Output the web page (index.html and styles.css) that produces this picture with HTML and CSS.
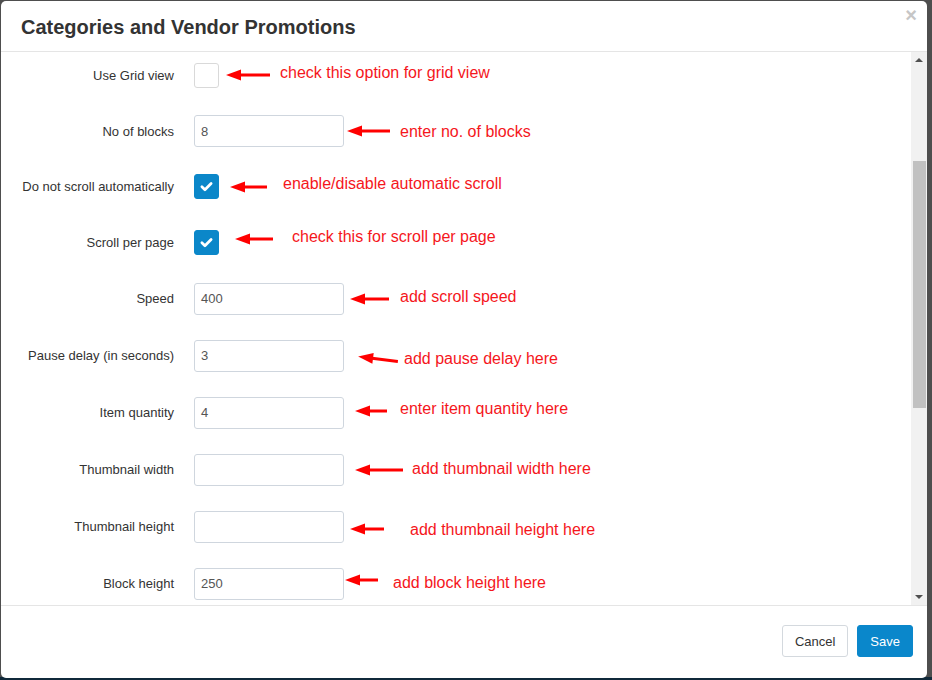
FILE: index.html
```html
<!DOCTYPE html>
<html lang="en">
<head>
<meta charset="utf-8">
<title>Categories and Vendor Promotions</title>
<link rel="stylesheet" href="styles.css">
</head>
<body>
<div class="modal">
  <div class="modal-header">
    <h4 class="modal-title">Categories and Vendor Promotions</h4>
    <span class="close">&times;</span>
  </div>
  <div class="modal-body">
    <div class="form">
      <div class="row r56 n1">
        <label class="label">Use Grid view</label>
        <span class="checkbox"></span>
        <span class="note"><svg class="arrow"><polygon points="0,6 15,0.5 15,11.5"/><line x1="14" y1="6" x2="100%" y2="6"/></svg><span class="note-text">check this option for grid view</span></span>
      </div>
      <div class="row r56 n2">
        <label class="label">No of blocks</label>
        <span class="input">8</span>
        <span class="note"><svg class="arrow"><polygon points="0,6 15,0.5 15,11.5"/><line x1="14" y1="6" x2="100%" y2="6"/></svg><span class="note-text">enter no. of blocks</span></span>
      </div>
      <div class="row r55 n3">
        <label class="label">Do not scroll automatically</label>
        <span class="checkbox checked"><svg viewBox="0 0 25 25"><path d="M7.5 12.8 L10.8 16 L17.5 9.3"/></svg></span>
        <span class="note"><svg class="arrow"><polygon points="0,6 15,0.5 15,11.5"/><line x1="14" y1="6" x2="100%" y2="6"/></svg><span class="note-text">enable/disable automatic scroll</span></span>
      </div>
      <div class="row r56 n4">
        <label class="label">Scroll per page</label>
        <span class="checkbox checked"><svg viewBox="0 0 25 25"><path d="M7.5 12.8 L10.8 16 L17.5 9.3"/></svg></span>
        <span class="note"><svg class="arrow"><polygon points="0,6 15,0.5 15,11.5"/><line x1="14" y1="6" x2="100%" y2="6"/></svg><span class="note-text">check this for scroll per page</span></span>
      </div>
      <div class="row n5">
        <label class="label">Speed</label>
        <span class="input">400</span>
        <span class="note"><svg class="arrow"><polygon points="0,6 15,0.5 15,11.5"/><line x1="14" y1="6" x2="100%" y2="6"/></svg><span class="note-text">add scroll speed</span></span>
      </div>
      <div class="row n6">
        <label class="label">Pause delay (in seconds)</label>
        <span class="input">3</span>
        <span class="note"><svg class="arrow"><polygon points="0,6 15,0.5 15,11.5"/><line x1="14" y1="6" x2="100%" y2="6"/></svg><span class="note-text">add pause delay here</span></span>
      </div>
      <div class="row n7">
        <label class="label">Item quantity</label>
        <span class="input">4</span>
        <span class="note"><svg class="arrow"><polygon points="0,6 15,0.5 15,11.5"/><line x1="14" y1="6" x2="100%" y2="6"/></svg><span class="note-text">enter item quantity here</span></span>
      </div>
      <div class="row n8">
        <label class="label">Thumbnail width</label>
        <span class="input"></span>
        <span class="note"><svg class="arrow"><polygon points="0,6 15,0.5 15,11.5"/><line x1="14" y1="6" x2="100%" y2="6"/></svg><span class="note-text">add thumbnail width here</span></span>
      </div>
      <div class="row n9">
        <label class="label">Thumbnail height</label>
        <span class="input"></span>
        <span class="note"><svg class="arrow"><polygon points="0,6 15,0.5 15,11.5"/><line x1="14" y1="6" x2="100%" y2="6"/></svg><span class="note-text">add thumbnail height here</span></span>
      </div>
      <div class="row n10">
        <label class="label">Block height</label>
        <span class="input">250</span>
        <span class="note"><svg class="arrow"><polygon points="0,6 15,0.5 15,11.5"/><line x1="14" y1="6" x2="100%" y2="6"/></svg><span class="note-text">add block height here</span></span>
      </div>
    </div>
    <div class="scrollbar">
      <span class="sb-arrow sb-up"></span>
      <div class="sb-track"><div class="sb-thumb"></div></div>
      <span class="sb-arrow sb-down"></span>
    </div>
  </div>
  <div class="modal-footer">
    <button class="btn btn-default">Cancel</button>
    <button class="btn btn-primary">Save</button>
  </div>
</div>
</body>
</html>
```
FILE: styles.css
```css
html, body {
  margin: 0;
  padding: 0;
}
body {
  width: 932px;
  height: 680px;
  overflow: hidden;
  background: linear-gradient(to bottom, #4e4e4e 0, #4e4e4e 677px, #10293a 677px);
  font-family: "Liberation Sans", Arial, sans-serif;
  color: #333;
}
.modal {
  box-sizing: border-box;
  margin: 1px 0 0 1px;
  width: 926px;
  height: 677px;
  background: #fff;
  border-radius: 5px;
  display: flex;
  flex-direction: column;
  overflow: hidden;
}
.modal-header {
  flex: 0 0 auto;
  height: 50px;
  border-bottom: 1px solid #e5e5e5;
  display: flex;
  align-items: center;
  justify-content: space-between;
  padding: 0 10px 0 20px;
}
.modal-title {
  margin: 0;
  font-size: 20px;
  font-weight: bold;
  color: #333;
  padding-top: 2px;
}
.close {
  align-self: flex-start;
  margin-top: 4px;
  font-size: 20px;
  font-weight: bold;
  color: #c6c6c6;
  line-height: 20px;
}
.modal-body {
  flex: 0 0 553px;
  display: flex;
  overflow: hidden;
}
.form {
  flex: 1;
  overflow: hidden;
  margin-top: -5px;
}
.row {
  height: 57px;
  display: flex;
  align-items: center;
}
.row.r56 { height: 56px; }
.row.r55 { height: 55px; }
.label {
  width: 173px;
  margin-right: 20px;
  text-align: right;
  font-size: 13px;
  color: #333;
  flex: 0 0 auto;
}
.input {
  box-sizing: border-box;
  width: 150px;
  height: 32px;
  border: 1px solid #cfd6de;
  border-radius: 3px;
  padding: 0 6px;
  display: flex;
  align-items: center;
  font-size: 13px;
  color: #555;
  flex: 0 0 auto;
}
.checkbox {
  box-sizing: border-box;
  width: 25px;
  height: 25px;
  border: 1px solid #d9d9d9;
  border-radius: 3px;
  background: #fff;
  flex: 0 0 auto;
}
.checkbox.checked {
  background: #0b87c9;
  border-color: #0b87c9;
}
.checkbox svg {
  display: block;
  width: 23px;
  height: 23px;
}
.checkbox path {
  fill: none;
  stroke: #fff;
  stroke-width: 3;
  stroke-linecap: round;
  stroke-linejoin: round;
}
.note {
  display: flex;
  align-items: center;
}
.arrow {
  display: block;
  width: var(--aw);
  height: 12px;
  margin-left: var(--ml);
  transform: translateY(var(--ay)) rotate(var(--rot, 0deg));
  overflow: visible;
}
.arrow polygon {
  fill: #f00;
}
.arrow line {
  stroke: #f00;
  stroke-width: 3;
}
.note-text {
  margin-left: var(--tg);
  transform: translateY(var(--ty));
  font-size: 16px;
  color: #f5161c;
  white-space: nowrap;
}
.n1 { --ml: 7px; --aw: 44px; --tg: 10px; --ay: 0px; --ty: -2px; }
.n2 { --ml: 3px; --aw: 43px; --tg: 10px; --ay: 0px; --ty: 1px; }
.n3 { --ml: 11px; --aw: 37px; --tg: 16px; --ay: 0px; --ty: -3px; }
.n4 { --ml: 16px; --aw: 38px; --tg: 19px; --ay: -3px; --ty: -5px; }
.n5 { --ml: 6px; --aw: 39px; --tg: 11px; --ay: 0px; --ty: -2px; }
.n6 { --ml: 14px; --aw: 40px; --tg: 6px; --ay: 3px; --ty: 3px; --rot: 7deg; }
.n7 { --ml: 11px; --aw: 32px; --tg: 13px; --ay: -2px; --ty: -4px; }
.n8 { --ml: 11px; --aw: 48px; --tg: 9px; --ay: 0px; --ty: -1px; }
.n9 { --ml: 6px; --aw: 34px; --tg: 26px; --ay: 2px; --ty: 3px; }
.n10 { --ml: 1px; --aw: 33px; --tg: 15px; --ay: -4px; --ty: -1px; }
.scrollbar {
  flex: 0 0 16px;
  background: #f1f1f1;
  display: flex;
  flex-direction: column;
  align-items: center;
}
.sb-arrow {
  flex: 0 0 17px;
  width: 16px;
  position: relative;
}
.sb-up::after, .sb-down::after {
  content: "";
  position: absolute;
  left: 4px;
  width: 0;
  height: 0;
  border-left: 4px solid transparent;
  border-right: 4px solid transparent;
}
.sb-up::after {
  top: 6px;
  border-bottom: 4px solid #505050;
}
.sb-down::after {
  bottom: 6px;
  border-top: 4px solid #505050;
}
.sb-track {
  flex: 1;
  width: 16px;
  display: flex;
  justify-content: center;
}
.sb-thumb {
  width: 13px;
  height: 247px;
  margin-top: 92px;
  background: #c1c1c1;
}
.modal-footer {
  flex: 1;
  border-top: 1px solid #e5e5e5;
  display: flex;
  justify-content: flex-end;
  align-items: flex-start;
  padding: 19px 14px 0 0;
  gap: 9px;
}
.btn {
  font-family: "Liberation Sans", Arial, sans-serif;
  font-size: 13px;
  height: 32px;
  padding: 0 12px;
  border-radius: 3px;
  border: 1px solid transparent;
  cursor: pointer;
}
.btn-default {
  background: #fff;
  color: #333;
  border-color: #d4d9de;
}
.btn-primary {
  background: #0a87cb;
  border-color: #0a87cb;
  color: #fff;
}
```
